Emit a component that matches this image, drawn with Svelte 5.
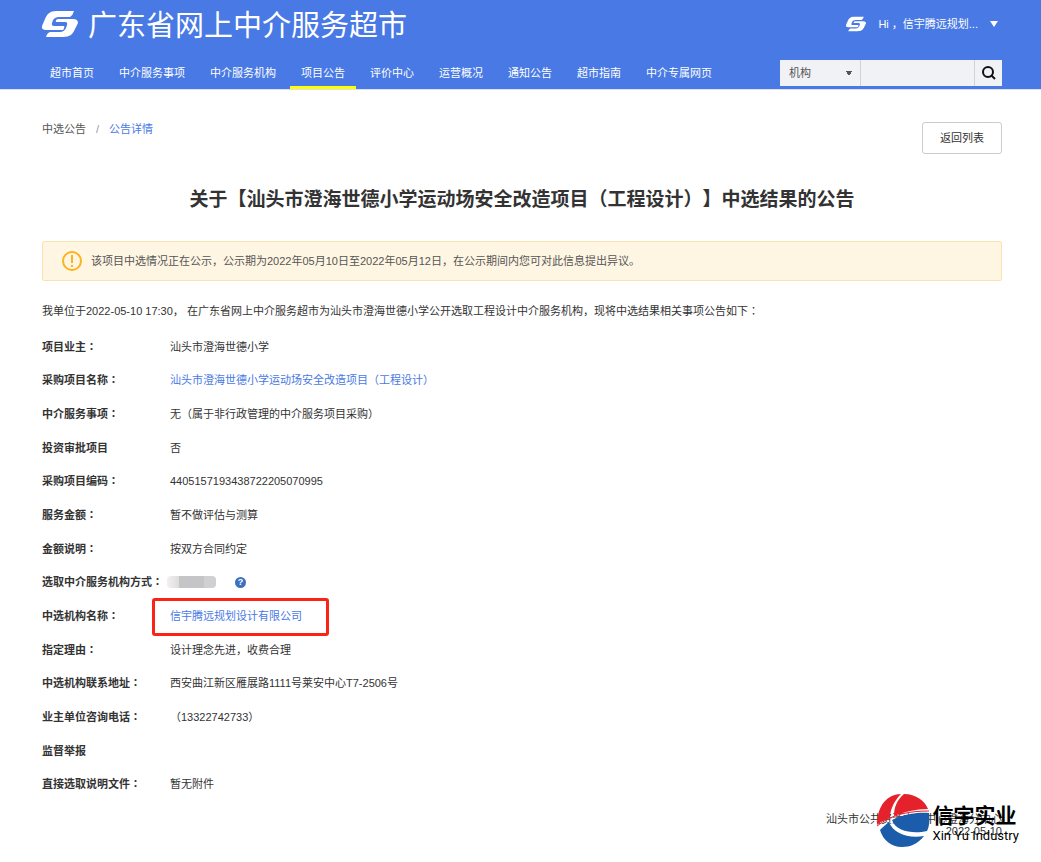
<script lang="ts">
	type Row = {
		label: string;
		value?: string;
		link?: boolean;
		marked?: boolean;
		method?: boolean;
		plain?: boolean;
	};

	const nav = [
		'超市首页',
		'中介服务事项',
		'中介服务机构',
		'项目公告',
		'评价中心',
		'运营概况',
		'通知公告',
		'超市指南',
		'中介专属网页'
	];
	const active = '项目公告';

	const rows: Row[] = [
		{ label: '项目业主', value: '汕头市澄海世德小学' },
		{ label: '采购项目名称', value: '汕头市澄海世德小学运动场安全改造项目（工程设计）', link: true },
		{ label: '中介服务事项', value: '无（属于非行政管理的中介服务项目采购）' },
		{ label: '投资审批项目', value: '否', plain: true },
		{ label: '采购项目编码', value: '4405157193438722205070995' },
		{ label: '服务金额', value: '暂不做评估与测算' },
		{ label: '金额说明', value: '按双方合同约定' },
		{ label: '选取中介服务机构方式', method: true },
		{ label: '中选机构名称', value: '信宇腾远规划设计有限公司', link: true, marked: true },
		{ label: '指定理由', value: '设计理念先进，收费合理' },
		{ label: '中选机构联系地址', value: '西安曲江新区雁展路1111号莱安中心T7-2506号' },
		{ label: '业主单位咨询电话', value: '（13322742733）' },
		{ label: '监督举报', plain: true },
		{ label: '直接选取说明文件', value: '暂无附件' }
	];

	let keyword = $state('');
</script>

{#snippet logo(cls: string)}
	<svg class={cls} viewBox="0 0 36 28" aria-hidden="true">
		<path d="M32 1H14C8 1 5 4 3 9L0 16Q-1 20 5 20H21Q23 18 22 16H12Q9 16 10 13L11 10Q13 7 17 7H28Q31 5 32 1Z" fill="#fff" />
		<path d="M4 27H21C28 27 31 24 33 19L36 13Q36 9 31 9H16Q13 10 14 12H23Q26 12 25 15L24 18Q22 22 18 22H8Q5 23 4 27Z" fill="#fff" />
	</svg>
{/snippet}

<header>
	<div class="wrap">
		<div class="top">
			<a class="brand" href="#home">
				{@render logo('brand-logo')}
				<span>广东省网上中介服务超市</span>
			</a>
			<button class="user" type="button">
				{@render logo('user-logo')}
				<span>Hi ，信宇腾远规划...</span>
				<i class="arrow"></i>
			</button>
		</div>
		<div class="bar">
			<nav>
				{#each nav as item}
					<a href="#nav" class:active={item === active}>{item}</a>
				{/each}
			</nav>
			<form class="search" onsubmit={(e) => e.preventDefault()}>
				<select aria-label="搜索类型">
					<option>机构</option>
				</select>
				<input type="text" aria-label="关键字" bind:value={keyword} />
				<button type="submit" aria-label="搜索">
					<svg viewBox="0 0 14 14" aria-hidden="true">
						<circle cx="6" cy="6" r="5" />
						<path d="M9 9l4 4" />
					</svg>
				</button>
			</form>
		</div>
	</div>
</header>

<main class="wrap">
	<div class="crumbs">
		<div class="path">
			<a href="#list">中选公告</a>
			<span>/</span>
			<a class="current" href="#detail">公告详情</a>
		</div>
		<button class="back" type="button">返回列表</button>
	</div>

	<h1>关于【汕头市澄海世德小学运动场安全改造项目（工程设计）】中选结果的公告</h1>

	<div class="notice">
		<svg viewBox="0 0 20 20" aria-hidden="true">
			<circle cx="10" cy="10" r="9" />
			<path d="M10 4v8M10 14v2" />
		</svg>
		<span>该项目中选情况正在公示，公示期为2022年05月10日至2022年05月12日，在公示期间内您可对此信息提出异议。</span>
	</div>

	<p class="intro">
		我单位于2022-05-10 17:30， 在广东省网上中介服务超市为汕头市澄海世德小学公开选取工程设计中介服务机构，现将中选结果相关事项公告如下<span class="colon">：</span>
	</p>

	<dl>
		{#each rows as row}
			<div class="row">
				<dt>{row.label}{#if !row.plain}<span class="colon">：</span>{/if}</dt>
				<dd>
					{#if row.method}
						<span class="masked"><i></i><i></i><i></i></span>
						<button class="help" type="button" aria-label="帮助">?</button>
					{:else if row.link}
						<a href="#item" class:marked={row.marked}>{row.value}</a>
					{:else}
						{row.value}
					{/if}
				</dd>
			</div>
		{/each}
	</dl>

	<footer>
		<div>汕头市公共资源交易中心澄海分中心</div>
		<div>2022-05-10</div>
		<div class="stamp">
			<svg viewBox="0 0 54 54" aria-hidden="true">
				<path d="M1 32C1 12 12 1 25 1C17 9 14 18 14 25C8 27 4 29 1 32Z" fill="#e5222b" />
				<path d="M28 1C40 1 49 8 52 16C40 16 28 19 18 23C18 14 21 7 28 1Z" fill="#e5222b" />
				<path d="M1 33C16 21 34 18 53 18" fill="none" stroke="#e5222b" />
				<path d="M16 27C28 21 42 19 53 20C54 28 53 34 51 38C38 41 20 39 16 27Z" fill="#1c5dab" />
				<path d="M4 37C7 34 10 31 13 29C17 40 32 46 48 43C42 51 34 54 26 54C15 54 7 47 4 37Z" fill="#1c5dab" />
			</svg>
			<div class="stamp-text">
				<strong>信宇实业</strong>
				<span>Xin Yu Industry</span>
			</div>
		</div>
	</footer>
</main>

<style>
	:global(body) {
		background: #fff;
		color: #333;
		font: 11px/18px 'Liberation Sans', 'Noto Sans CJK SC', sans-serif;
		text-spacing-trim: space-all;
	}

	a {
		color: #4879e4;
		text-decoration: none;
	}

	button,
	input,
	select {
		font: inherit;
		border: 0;
		border-radius: 0;
		margin: 0;
		padding: 0;
	}

	button {
		cursor: pointer;
	}

	.colon {
		font-family: 'Noto Sans CJK TC', sans-serif;
		line-height: 1;
	}

	.wrap {
		margin: 0 39px 0 42px;
	}

	header {
		background: #4879e4;
		border-bottom: 1px solid #dbe1ee;
	}

	.top {
		display: flex;
		justify-content: space-between;
		align-items: center;
		height: 48px;
	}

	.brand {
		display: flex;
		align-items: center;
		gap: 11px;
		color: #fff;
		font-size: 29px;
		line-height: 48px;
		padding-top: 4px;
	}

	.brand-logo {
		width: 36px;
		height: 28px;
		margin: 0 -1px 4px 0;
	}

	.user {
		display: flex;
		align-items: center;
		gap: 12px;
		background: none;
		color: #fff;
		padding-right: 4px;
	}

	.user-logo {
		width: 20px;
		height: 16px;
	}

	.arrow {
		border: 4px solid transparent;
		border-top: 6px solid #fff;
		border-bottom: 0;
	}

	.bar {
		display: flex;
		justify-content: space-between;
		align-items: center;
	}

	nav {
		display: flex;
		gap: 3px;
		margin-left: -3px;
	}

	nav a {
		color: #fff;
		padding: 0 11px;
		height: 38px;
		line-height: 50px;
		border-bottom: 3px solid transparent;
	}

	nav a.active {
		border-color: #ff0;
	}

	.search {
		display: flex;
		height: 26px;
		margin-top: 8px;
	}

	.search select,
	.search input,
	.search button {
		background: #f0f2f5;
		color: #555;
	}

	.search select {
		appearance: none;
		width: 80px;
		padding-left: 9px;
		background-image: linear-gradient(to bottom left, #555 50%, transparent 50%), linear-gradient(to bottom right, #555 50%, transparent 50%);
		background-size: 3px 5px;
		background-position: 66px 11px, 69px 11px;
		background-repeat: no-repeat;
	}

	.search input {
		width: 113px;
		border-left: 1px solid #d0d3d8;
	}

	.search button {
		display: grid;
		place-items: center;
		width: 28px;
		border-left: 1px solid #d0d3d8;
	}

	.search svg {
		width: 14px;
		height: 14px;
		fill: none;
		stroke: #111;
		stroke-width: 2;
	}

	.crumbs {
		display: flex;
		justify-content: space-between;
		padding-top: 32px;
	}

	.path {
		display: flex;
		gap: 10px;
		line-height: 14px;
	}

	.path a {
		color: #555;
	}

	.path span {
		color: #999;
	}

	.path .current {
		color: #4879e4;
	}

	.back {
		width: 80px;
		height: 32px;
		background: #fff;
		color: #333;
		border: 1px solid #ccc;
		border-radius: 3px;
	}

	h1 {
		margin: 31px 0 26px;
		text-align: center;
		font-size: 19px;
		line-height: 30px;
	}

	.notice {
		display: flex;
		align-items: center;
		gap: 9px;
		padding: 10px 19px;
		background: #fff5e3;
		border: 1px solid #fbe3b0;
		border-radius: 2px;
		color: #555;
	}

	.notice svg {
		width: 20px;
		height: 20px;
		margin: -1px 0;
		fill: none;
		stroke: #fbb41f;
		stroke-width: 2;
	}

	.intro {
		margin: 21px 0 10px;
	}

	dl {
		display: grid;
		grid-auto-rows: 1fr;
		min-height: 471px;
		margin: 0;
	}

	.row {
		display: flex;
		align-items: center;
	}

	dt {
		width: 128px;
		font-weight: bold;
		white-space: nowrap;
	}

	dd {
		display: flex;
		align-items: center;
		margin: 0;
	}

	.masked {
		display: flex;
		width: 49px;
		height: 12px;
		margin-left: -3px;
		border-radius: 4px;
		overflow: hidden;
	}

	.masked i {
		flex: 1;
		background: linear-gradient(to right, #f2f0f0, #dfdcdc);
	}

	.masked i:nth-child(2) {
		flex: 2;
		background: #c5c5c7;
	}

	.masked i:nth-child(3) {
		background: #d0d0d3;
	}

	.help {
		width: 11px;
		height: 11px;
		margin-left: 19px;
		border-radius: 50%;
		background: #3c71bd;
		color: #fff;
		font-size: 9px;
		font-weight: bold;
		line-height: 11px;
	}

	.marked {
		position: relative;
	}

	.marked::after {
		content: '';
		position: absolute;
		inset: -9px -27px -11px -18px;
		border: 3px solid #fb2216;
		border-radius: 3px;
	}

	footer {
		position: relative;
		padding: 12px 0 20px;
		text-align: right;
		line-height: 12px;
	}

	.stamp {
		position: absolute;
		right: -17px;
		top: -8px;
		display: flex;
		align-items: center;
		gap: 2px;
		color: #000;
		text-align: left;
	}

	.stamp svg {
		width: 54px;
		height: 54px;
	}

	.stamp-text {
		display: flex;
		flex-direction: column;
		padding-top: 8px;
	}

	.stamp strong {
		display: block;
		font-size: 21px;
		line-height: 24px;
	}

	.stamp span {
		font-family: Roboto, sans-serif;
		font-size: 13px;
		line-height: 16px;
	}
</style>
